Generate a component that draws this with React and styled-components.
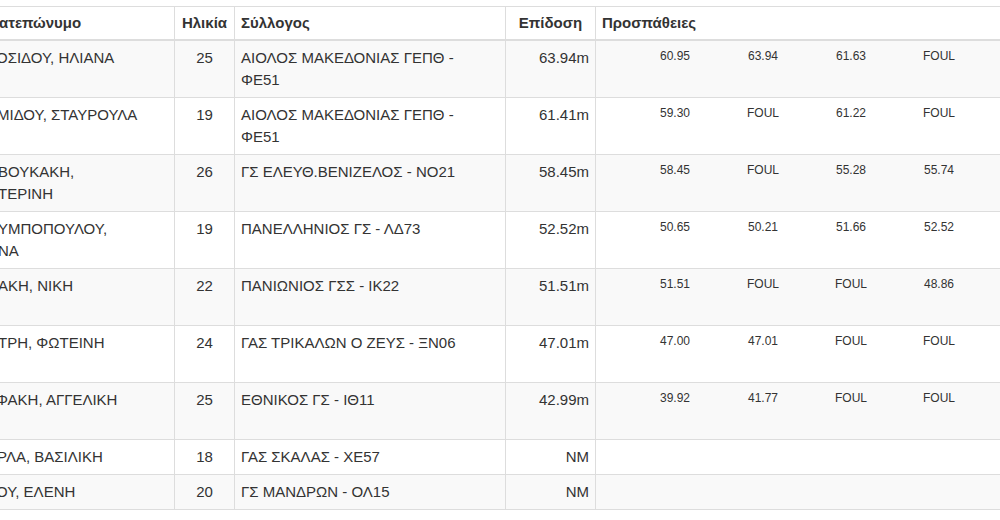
import React from "react";
import styled, { createGlobalStyle } from "styled-components";

const GlobalStyle = createGlobalStyle`
  body {
    margin: 0;
    background: #fff;
    color: #333;
    font-family: "Liberation Sans", Arial, sans-serif;
  }
`;

const rows = [
  { name: "ΟΣΙΔΟΥ, ΗΛΙΑΝΑ", shift: -4, age: 25, club: "ΑΙΟΛΟΣ ΜΑΚΕΔΟΝΙΑΣ ΓΕΠΘ -\nΦΕ51", mark: "63.94m", attempts: ["60.95", "63.94", "61.63", "FOUL"] },
  { name: "ΜΙΔΟΥ, ΣΤΑΥΡΟΥΛΑ", shift: -3, age: 19, club: "ΑΙΟΛΟΣ ΜΑΚΕΔΟΝΙΑΣ ΓΕΠΘ -\nΦΕ51", mark: "61.41m", attempts: ["59.30", "FOUL", "61.22", "FOUL"] },
  { name: "ΒΟΥΚΑΚΗ,\nΤΕΡΙΝΗ", shift: -2, age: 26, club: "ΓΣ ΕΛΕΥΘ.ΒΕΝΙΖΕΛΟΣ - ΝΟ21", mark: "58.45m", attempts: ["58.45", "FOUL", "55.28", "55.74"] },
  { name: "ΥΜΠΟΠΟΥΛΟΥ,\nΝΑ", shift: -2, age: 19, club: "ΠΑΝΕΛΛΗΝΙΟΣ ΓΣ - ΛΔ73", mark: "52.52m", attempts: ["50.65", "50.21", "51.66", "52.52"] },
  { name: "ΑΚΗ, ΝΙΚΗ", shift: -2, age: 22, club: "ΠΑΝΙΩΝΙΟΣ ΓΣΣ - ΙΚ22", mark: "51.51m", attempts: ["51.51", "FOUL", "FOUL", "48.86"] },
  { name: "ΤΡΗ, ΦΩΤΕΙΝΗ", shift: -2, age: 24, club: "ΓΑΣ ΤΡΙΚΑΛΩΝ Ο ΖΕΥΣ - ΞΝ06", mark: "47.01m", attempts: ["47.00", "47.01", "FOUL", "FOUL"] },
  { name: "ΦΑΚΗ, ΑΓΓΕΛΙΚΗ", shift: -4, age: 25, club: "ΕΘΝΙΚΟΣ ΓΣ - ΙΘ11", mark: "42.99m", attempts: ["39.92", "41.77", "FOUL", "FOUL"] },
  { name: "ΡΛΑ, ΒΑΣΙΛΙΚΗ", shift: -3, age: 18, club: "ΓΑΣ ΣΚΑΛΑΣ - ΧΕ57", mark: "NM", attempts: [] },
  { name: "ΟΥ, ΕΛΕΝΗ", shift: -4, age: 20, club: "ΓΣ ΜΑΝΔΡΩΝ - ΟΛ15", mark: "NM", attempts: [] },
];

export default function App() {
  return (
    <>
      <GlobalStyle />
      <Viewport>
        <Table>
          <Row $head>
            <Cell $head>
              <NameText $shift={-1}>ατεπώνυμο</NameText>
            </Cell>
            <Cell $head $align="center">Ηλικία</Cell>
            <Cell $head>Σύλλογος</Cell>
            <Cell $head $align="center">Επίδοση</Cell>
            <Cell $head>Προσπάθειες</Cell>
          </Row>
          {rows.map((r, i) => (
            <Row key={i} $striped={i % 2 === 0}>
              <Cell>
                <NameText $shift={r.shift}>{r.name}</NameText>
              </Cell>
              <Cell $align="center">{r.age}</Cell>
              <Cell>{r.club}</Cell>
              <Cell $align="right">{r.mark}</Cell>
              <Cell>
                <Attempts $filled={r.attempts.length > 0}>
                  {r.attempts.map((a, j) => (
                    <Attempt key={j}>{a}</Attempt>
                  ))}
                </Attempts>
              </Cell>
            </Row>
          ))}
        </Table>
      </Viewport>
    </>
  );
}

const Viewport = styled.div`
  width: 1000px;
  height: 520px;
  overflow: hidden;
  padding-top: 6px;
  box-sizing: border-box;
`;

const Table = styled.div`
  margin-left: -6px;
  width: 1100px;
  border-top: 1px solid #ddd;
  font-size: 15px;
  line-height: 22px;
`;

const Row = styled.div`
  display: grid;
  grid-template-columns: 181px 60px 271px 90px 1fr;
  border-bottom: ${({ $head }) => ($head ? "2px" : "1px")} solid #ddd;
  background: ${({ $striped }) => ($striped ? "#f9f9f9" : "#fff")};
`;

const Cell = styled.div`
  padding: ${({ $head }) => ($head ? "5px 6px" : "6px")};
  border-right: 1px solid #ddd;
  text-align: ${({ $align }) => $align || "left"};
  font-weight: ${({ $head }) => ($head ? 700 : 400)};
  white-space: pre-line;
  overflow: hidden;
`;

const NameText = styled.span`
  display: block;
  margin-left: ${({ $shift }) => $shift || 0}px;
  white-space: pre-line;
`;

const Attempts = styled.div`
  display: flex;
  align-items: flex-start;
  min-height: ${({ $filled }) => ($filled ? "44px" : "0")};
  padding-left: 29px;
  font-size: 12px;
  line-height: 18px;
`;

const Attempt = styled.span`
  width: 88px;
  text-align: center;
`;
